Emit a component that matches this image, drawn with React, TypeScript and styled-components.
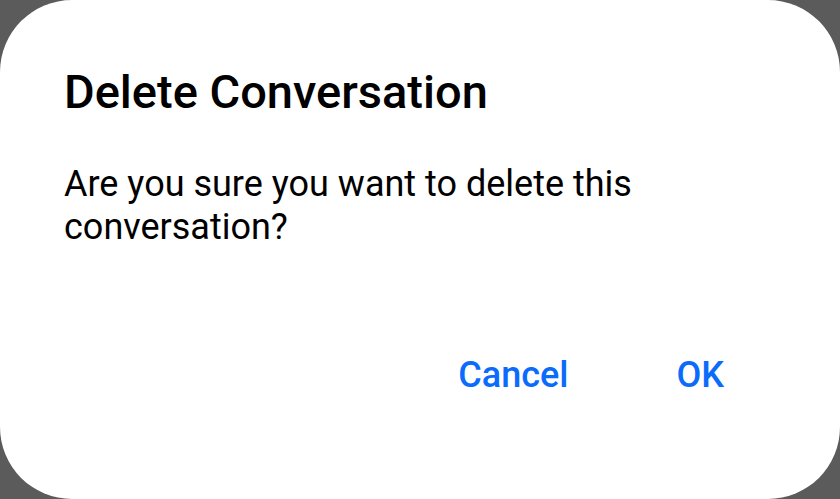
import React from "react";
import styled, { createGlobalStyle } from "styled-components";

const Global = createGlobalStyle`
  html, body {
    margin: 0;
    padding: 0;
    background: #5b5b5b;
  }
  body {
    font-family: Roboto, "Noto Sans", sans-serif;
    -webkit-font-smoothing: antialiased;
  }
`;

const Dialog = styled.div`
  box-sizing: border-box;
  width: 840px;
  height: 499px;
  background: #ffffff;
  border-radius: 72px;
  display: flex;
  flex-direction: column;
  padding: 68px 64px 0 64px;
`;

const Title = styled.h1`
  margin: 0;
  font-size: 47px;
  line-height: 48px;
  font-weight: 500;
  color: #000000;
`;

const Message = styled.p`
  margin: 47px 0 0 0;
  font-size: 36px;
  line-height: 43px;
  font-weight: 400;
  color: #000000;
  max-width: 620px;
`;

const Actions = styled.div`
  display: flex;
  justify-content: flex-end;
  gap: 108px;
  margin-top: 106px;
  padding-right: 52px;
`;

const TextButton = styled.button`
  border: none;
  background: transparent;
  padding: 0;
  margin: 0;
  font-family: Roboto, "Noto Sans", sans-serif;
  font-size: 36px;
  line-height: 40px;
  font-weight: 500;
  color: #0b6cfb;
  cursor: pointer;
`;

export default function App() {
  return (
    <>
      <Global />
      <Dialog>
        <Title>Delete Conversation</Title>
        <Message>Are you sure you want to delete this conversation?</Message>
        <Actions>
          <TextButton>Cancel</TextButton>
          <TextButton>OK</TextButton>
        </Actions>
      </Dialog>
    </>
  );
}
